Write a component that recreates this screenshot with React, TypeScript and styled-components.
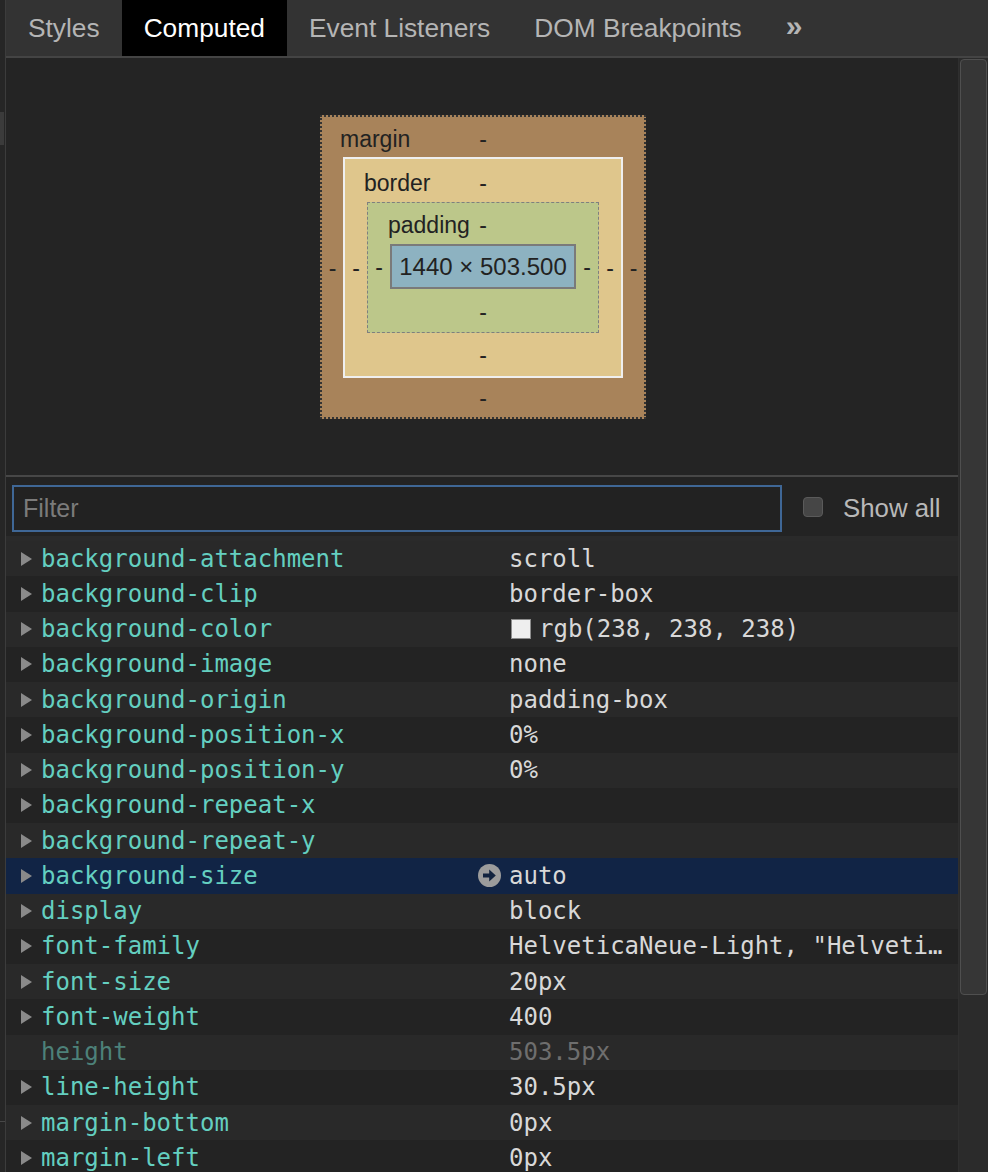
import React from "react";
import styled, { createGlobalStyle } from "styled-components";

const Global = createGlobalStyle`
  html, body { margin: 0; padding: 0; background: #262626; }
  body { font-family: "Liberation Sans", Arial, sans-serif; }
  * { box-sizing: border-box; }
`;

const Page = styled.div`
  display: flex;
  width: 988px;
  height: 1172px;
  overflow: hidden;
  background: #262626;
`;

const Gutter = styled.div`
  width: 6px;
  flex: none;
  display: flex;
  flex-direction: column;
  background: #262626;
  border-right: 1px solid #3c3c3c;
`;

const GutterGap = styled.div<{ $h: number }>`
  height: ${(p) => p.$h}px;
  flex: none;
`;

const GutterPatch = styled.div`
  height: 33px;
  width: 4px;
  background: #3b3b3b;
`;

const GutterRule = styled.div`
  height: 1px;
  background: #484848;
`;

const Main = styled.div`
  flex: 1;
  display: flex;
  flex-direction: column;
  min-width: 0;
`;

const TabBar = styled.div`
  height: 58px;
  flex: none;
  display: flex;
  align-items: stretch;
  background: #333333;
  border-bottom: 2px solid #444444;
`;

const Tab = styled.div<{ $active?: boolean }>`
  display: flex;
  align-items: center;
  padding: 0 22px;
  font-size: 26.3px;
  color: ${(p) => (p.$active ? "#ffffff" : "#b5b5b5")};
  background: ${(p) => (p.$active ? "#000000" : "transparent")};
  white-space: nowrap;
`;

const More = styled(Tab)`
  font-size: 30px;
  font-weight: bold;
  padding: 0 22px;
  padding-bottom: 4px;
`;

const Body = styled.div`
  flex: 1;
  display: flex;
  min-height: 0;
`;

const Content = styled.div`
  flex: 1;
  min-width: 0;
  display: flex;
  flex-direction: column;
  background: #242424;
  overflow: hidden;
`;

const BoxArea = styled.div`
  height: 419px;
  flex: none;
  display: flex;
  justify-content: center;
  align-items: center;
  padding-left: 2px;
  padding-top: 1px;
  border-bottom: 2px solid #474747;
`;

const Box = styled.div<{
  $bg: string;
  $border: string;
  $top: number;
  $bottom: number;
  $side: number;
}>`
  display: grid;
  grid-template-columns: ${(p) => p.$side}px auto ${(p) => p.$side}px;
  grid-template-rows: ${(p) => p.$top}px auto ${(p) => p.$bottom}px;
  background: ${(p) => p.$bg};
  border: ${(p) => p.$border};
  color: #222222;
  font-size: 23px;
  line-height: 26px;
`;

const BoxTop = styled.div<{ $labelTop: number }>`
  grid-column: 1 / 4;
  display: grid;
  grid-template-columns: minmax(0, 1fr) auto minmax(0, 1fr);
  align-items: start;
  padding-top: ${(p) => p.$labelTop}px;
`;

const BoxLabel = styled.span<{ $pad: number }>`
  justify-self: start;
  margin-left: ${(p) => p.$pad}px;
  white-space: nowrap;
`;

const BoxValue = styled.span`
  display: flex;
  align-items: center;
  justify-content: center;
`;

const BoxBottom = styled.div<{ $offset: number }>`
  grid-column: 1 / 4;
  display: flex;
  justify-content: center;
  padding-top: ${(p) => p.$offset}px;
`;

const ContentBox = styled.div`
  width: 186px;
  height: 45px;
  display: flex;
  align-items: center;
  justify-content: center;
  background: #8db2c1;
  border: 2px solid #7a7a7a;
  color: #222222;
  font-size: 24px;
  white-space: nowrap;
`;

const FilterRow = styled.div`
  height: 64px;
  flex: none;
  display: flex;
  align-items: flex-start;
  padding: 8px 16px 0 6px;
  gap: 21px;
  background: #232323;
  border-bottom: 5px solid #2a2a2a;
`;

const FilterInput = styled.div`
  width: 770px;
  height: 47px;
  display: flex;
  align-items: center;
  padding-left: 9px;
  border: 2px solid #3f6796;
  background: #222222;
  color: #7b7b7b;
  font-size: 25px;
`;

const ShowAll = styled.label`
  display: flex;
  align-items: center;
  gap: 20px;
  height: 47px;
  color: #b8b8b8;
  font-size: 25.8px;
  white-space: nowrap;
`;

const CheckBox = styled.span`
  width: 20px;
  height: 20px;
  margin-top: -4px;
  border-radius: 4px;
  background: #464646;
  border: 1px solid #5a5a5a;
`;

const List = styled.div`
  display: flex;
  flex-direction: column;
`;

const Row = styled.div<{ $odd: boolean; $selected?: boolean }>`
  height: 35.25px;
  flex: none;
  display: grid;
  grid-template-columns: 35px 432px 36px minmax(0, 1fr);
  align-items: center;
  padding-right: 9px;
  background: ${(p) =>
    p.$selected ? "#112445" : p.$odd ? "#232323" : "#292929"};
  font-family: "DejaVu Sans Mono", "Liberation Mono", monospace;
  font-size: 24px;
  white-space: nowrap;
`;

const Toggle = styled.span`
  justify-self: start;
  margin-left: 15px;
  width: 0;
  height: 0;
  border-left: 11px solid #8a8a8a;
  border-top: 7px solid transparent;
  border-bottom: 7px solid transparent;
`;

const Name = styled.span<{ $dim?: boolean }>`
  color: ${(p) => (p.$dim ? "#4d8179" : "#64cfc0")};
  overflow: hidden;
`;

const IconCell = styled.span`
  display: flex;
  align-items: center;
  padding-left: 5px;
`;

const Value = styled.span<{ $dim?: boolean }>`
  display: flex;
  align-items: center;
  min-width: 0;
  color: ${(p) => (p.$dim ? "#6e6e6e" : "#d8d8d8")};
`;

const Swatch = styled.span<{ $color: string }>`
  flex: none;
  width: 20px;
  height: 20px;
  margin-left: 2px;
  margin-right: 8px;
  background: ${(p) => p.$color};
  border: 1px solid #8c8c8c;
`;

const ScrollTrack = styled.div`
  width: 30px;
  flex: none;
  display: flex;
  flex-direction: column;
  padding: 1px 1px 0 1px;
  background: #2b2b2b;
  border-left: 1px solid #2f2f2f;
`;

const ScrollThumb = styled.div`
  height: 936px;
  border-radius: 4px;
  background: #363636;
  border: 1px solid #4f4f4f;
`;

type Prop = {
  name: string;
  value: string;
  swatch?: string;
  selected?: boolean;
  goto?: boolean;
  inherited?: boolean;
};

const rows: Prop[] = [
  { name: "background-attachment", value: "scroll" },
  { name: "background-clip", value: "border-box" },
  { name: "background-color", value: "rgb(238, 238, 238)", swatch: "#eeeeee" },
  { name: "background-image", value: "none" },
  { name: "background-origin", value: "padding-box" },
  { name: "background-position-x", value: "0%" },
  { name: "background-position-y", value: "0%" },
  { name: "background-repeat-x", value: "" },
  { name: "background-repeat-y", value: "" },
  { name: "background-size", value: "auto", selected: true, goto: true },
  { name: "display", value: "block" },
  { name: "font-family", value: 'HelveticaNeue-Light, "Helveti…' },
  { name: "font-size", value: "20px" },
  { name: "font-weight", value: "400" },
  { name: "height", value: "503.5px", inherited: true },
  { name: "line-height", value: "30.5px" },
  { name: "margin-bottom", value: "0px" },
  { name: "margin-left", value: "0px" },
];

const GotoIcon = () => (
  <svg width="23" height="23" viewBox="0 0 23 23">
    <circle cx="11.5" cy="11.5" r="11.5" fill="#9c9c9c" />
    <path d="M5 9.6h6.2V5.6l6.6 5.9-6.6 5.9v-4H5z" fill="#12233f" />
  </svg>
);

export default function App() {
  return (
    <Page>
      <Global />
      <Gutter>
        <GutterGap $h={112} />
        <GutterPatch />
        <GutterGap $h={976} />
        <GutterRule />
      </Gutter>
      <Main>
        <TabBar>
          <Tab>Styles</Tab>
          <Tab $active>Computed</Tab>
          <Tab>Event Listeners</Tab>
          <Tab>DOM Breakpoints</Tab>
          <More>»</More>
        </TabBar>
        <Body>
          <Content>
            <BoxArea>
              <Box
                $bg="#a8835a"
                $border="2px dotted #343434"
                $top={40}
                $bottom={39}
                $side={21}
              >
                <BoxTop $labelTop={9}>
                  <BoxLabel $pad={18}>margin</BoxLabel>
                  <BoxValue>-</BoxValue>
                </BoxTop>
                <BoxValue>-</BoxValue>
                <Box
                  $bg="#dfc68c"
                  $border="2px solid #efefef"
                  $top={43}
                  $bottom={43}
                  $side={22}
                >
                  <BoxTop $labelTop={11}>
                    <BoxLabel $pad={19}>border</BoxLabel>
                    <BoxValue>-</BoxValue>
                  </BoxTop>
                  <BoxValue>-</BoxValue>
                  <Box
                    $bg="#bcc78a"
                    $border="1px dashed #7f7f7f"
                    $top={41}
                    $bottom={43}
                    $side={22}
                  >
                    <BoxTop $labelTop={9}>
                      <BoxLabel $pad={20}>padding</BoxLabel>
                      <BoxValue>-</BoxValue>
                    </BoxTop>
                    <BoxValue>-</BoxValue>
                    <ContentBox>1440 × 503.500</ContentBox>
                    <BoxValue>-</BoxValue>
                    <BoxBottom $offset={10}>-</BoxBottom>
                  </Box>
                  <BoxValue>-</BoxValue>
                  <BoxBottom $offset={9}>-</BoxBottom>
                </Box>
                <BoxValue>-</BoxValue>
                <BoxBottom $offset={7}>-</BoxBottom>
              </Box>
            </BoxArea>
            <FilterRow>
              <FilterInput>Filter</FilterInput>
              <ShowAll>
                <CheckBox />
                Show all
              </ShowAll>
            </FilterRow>
            <List>
              {rows.map((r, i) => (
                <Row key={r.name} $odd={i % 2 === 1} $selected={r.selected}>
                  {r.inherited ? <span /> : <Toggle />}
                  <Name $dim={r.inherited}>{r.name}</Name>
                  <IconCell>{r.goto ? <GotoIcon /> : null}</IconCell>
                  <Value $dim={r.inherited}>
                    {r.swatch ? <Swatch $color={r.swatch} /> : null}
                    {r.value}
                  </Value>
                </Row>
              ))}
            </List>
          </Content>
          <ScrollTrack>
            <ScrollThumb />
          </ScrollTrack>
        </Body>
      </Main>
    </Page>
  );
}
